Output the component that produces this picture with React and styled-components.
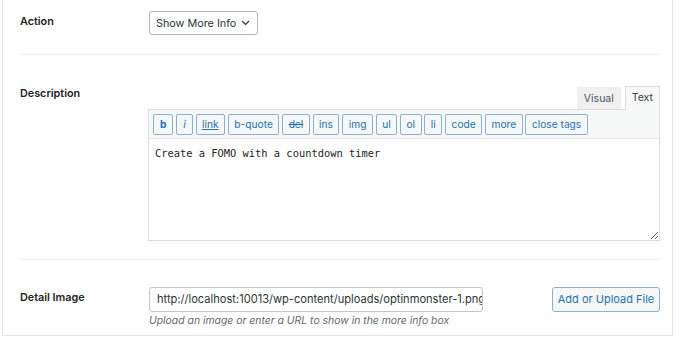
import React from "react";
import styled, { createGlobalStyle, css } from "styled-components";

const Global = createGlobalStyle`
  html, body { margin: 0; padding: 0; background: #fff; }
  body { font-family: Inter, "Noto Sans", sans-serif; color: #1d2327; }
`;

const Panel = styled.div`
  margin-left: 2px;
  width: 671px;
  height: 336px;
  box-sizing: border-box;
  border: 1px solid #e6e6e8;
  border-top: none;
  padding: 0 12px 0 17px;
  background: #fff;
`;

const Row = styled.div`
  display: grid;
  grid-template-columns: 129px 1fr;
  padding: ${(p) => p.$pad};
  border-bottom: ${(p) => (p.$last ? "none" : "1px solid #f0f0f1")};
`;

const Label = styled.div`
  font-size: 10.8px;
  font-weight: 600;
  line-height: 14px;
  padding-top: ${(p) => p.$top}px;
  color: #1d2327;
`;

const Select = styled.div`
  display: inline-flex;
  align-items: center;
  justify-content: space-between;
  height: 24px;
  box-sizing: border-box;
  border: 1px solid #b4b6b9;
  border-radius: 3px;
  padding: 0 7px 0 6px;
  font-size: 10.8px;
  color: #2c3338;
  white-space: nowrap;
  justify-self: start;
  width: 109px;
`;

const Editor = styled.div`
  display: flex;
  flex-direction: column;
  margin-left: -1px;
`;

const Tabs = styled.div`
  display: flex;
  justify-content: flex-end;
  align-items: flex-end;
  gap: 4px;
  height: 23px;
`;

const Tab = styled.div`
  box-sizing: border-box;
  height: ${(p) => (p.$active ? 24 : 22)}px;
  margin-bottom: ${(p) => (p.$active ? -1 : 0)}px;
  padding: 0 6px;
  font-size: 10.5px;
  line-height: 22px;
  color: ${(p) => (p.$active ? "#3c434a" : "#50575e")};
  background: ${(p) => (p.$active ? "#f6f7f7" : "#f0f0f1")};
  border: 1px solid ${(p) => (p.$active ? "#dcdcde" : "#f0f0f1")};
  border-bottom: none;
  position: relative;
  z-index: 1;
`;

const Toolbar = styled.div`
  display: flex;
  gap: 2.8px;
  height: 29px;
  box-sizing: border-box;
  padding: 4px 4px 0 4px;
  background: #f6f7f7;
  border: 1px solid #dcdcde;
  border-bottom: none;
`;

const QButton = styled.div`
  box-sizing: border-box;
  height: 21px;
  padding: 0 ${(p) => p.$px ?? 5.5}px;
  border: 1px solid #8eb0cf;
  border-radius: 2px;
  background: #f6f7f7;
  color: #2271b1;
  font-size: 10.2px;
  line-height: 19px;
  ${(p) => p.$bold && css`font-weight: 700;`}
  ${(p) => p.$italic && css`font-style: italic;`}
  ${(p) => p.$under && css`text-decoration: underline;`}
  ${(p) => p.$strike && css`text-decoration: line-through;`}
`;

const Area = styled.textarea`
  display: block;
  box-sizing: border-box;
  width: 100%;
  height: 103px;
  margin: 0;
  border: 1px solid #dcdcde;
  border-top: 1px solid #e8e8ea;
  padding: 7px 6px;
  font-family: "DejaVu Sans Mono", "Liberation Mono", monospace;
  font-size: 10.4px;
  line-height: 14px;
  color: #1d2327;
  resize: vertical;
  outline: none;
  background: #fff;
`;

const Field = styled.div`
  display: flex;
  align-items: flex-start;
  justify-content: space-between;
`;

const FieldCol = styled.div`
  display: flex;
  flex-direction: column;
  gap: 2px;
`;

const Input = styled.div`
  box-sizing: border-box;
  width: 334px;
  height: 25px;
  border: 1px solid #c3c4c7;
  border-radius: 3px;
  padding: 0 7px;
  font-size: 11.1px;
  line-height: 23px;
  color: #2c3338;
  white-space: nowrap;
  overflow: hidden;
`;

const Help = styled.div`
  font-size: 10.4px;
  font-style: italic;
  color: #646970;
  line-height: 14px;
`;

const Button = styled.div`
  box-sizing: border-box;
  height: 25px;
  width: 108px;
  border: 1px solid #8eb0cf;
  border-radius: 3px;
  background: #f6f7f7;
  color: #2271b1;
  font-size: 11px;
  line-height: 23px;
  text-align: center;
`;

const Chevron = () => (
  <svg width="9" height="6" viewBox="0 0 9 6" fill="none">
    <path d="M1 1l3.5 3.5L8 1" stroke="#2c3338" strokeWidth="1.2" />
  </svg>
);

const buttons = [
  { t: "b", $bold: true, $px: 6 },
  { t: "i", $italic: true, $px: 6 },
  { t: "link", $under: true },
  { t: "b-quote" },
  { t: "del", $strike: true },
  { t: "ins" },
  { t: "img" },
  { t: "ul" },
  { t: "ol" },
  { t: "li" },
  { t: "code" },
  { t: "more" },
  { t: "close tags" },
];

export default function App() {
  return (
    <>
      <Global />
      <Panel>
        <Row $pad="11px 0 19px">
          <Label $top={4}>Action</Label>
          <Select>
            Show More Info <Chevron />
          </Select>
        </Row>
        <Row $pad="31px 0 18px">
          <Label $top={1}>Description</Label>
          <Editor>
            <Tabs>
              <Tab>Visual</Tab>
              <Tab $active>Text</Tab>
            </Tabs>
            <Toolbar>
              {buttons.map(({ t, ...rest }) => (
                <QButton key={t} {...rest}>
                  {t}
                </QButton>
              ))}
            </Toolbar>
            <Area defaultValue="Create a FOMO with a countdown timer" />
          </Editor>
        </Row>
        <Row $pad="27px 0 0" $last>
          <Label $top={4}>Detail Image</Label>
          <Field>
            <FieldCol>
              <Input>http://localhost:10013/wp-content/uploads/optinmonster-1.png</Input>
              <Help>Upload an image or enter a URL to show in the more info box</Help>
            </FieldCol>
            <Button>Add or Upload File</Button>
          </Field>
        </Row>
      </Panel>
    </>
  );
}
